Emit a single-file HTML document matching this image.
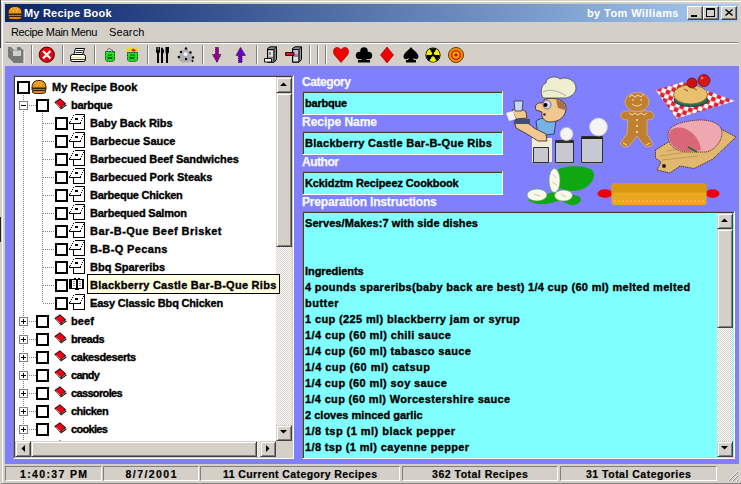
<!DOCTYPE html><html><head><meta charset="utf-8"><style>
*{margin:0;padding:0;box-sizing:border-box}
html,body{width:741px;height:484px;overflow:hidden;background:#D4D0C8}
body{position:relative;font-family:"Liberation Sans",sans-serif}
.a{position:absolute}
svg{position:absolute;overflow:visible}
.tt{position:absolute;color:#fff;font:bold 11px "Liberation Sans",sans-serif;white-space:pre;line-height:13px}
.tbtn{position:absolute;top:6px;width:16px;height:14px;background:#D4D0C8;border-top:1px solid #fff;border-left:1px solid #fff;border-right:1px solid #404040;border-bottom:1px solid #404040;box-shadow:inset -1px -1px 0 #808080}
.menu{position:absolute;top:26px;font:11px "Liberation Sans",sans-serif;color:#000;white-space:pre;line-height:13px}
.sep{position:absolute;top:45px;width:2px;height:19px;border-left:1px solid #808080;border-right:1px solid #fff}
.lbl{position:absolute;left:303px;color:#F8F8F8;font:bold 12px "Liberation Sans",sans-serif;white-space:pre;line-height:13px;-webkit-text-stroke:0.25px #F8F8F8}
.tb{position:absolute;left:302px;width:201px;height:24px;background:#80FFFF;border-top:1px solid #808080;border-left:1px solid #808080;border-right:1px solid #fff;border-bottom:1px solid #fff;box-shadow:inset 1px 1px 0 #404040}
.tbt{position:absolute;left:3px;top:5px;font:bold 11px "Liberation Sans",sans-serif;white-space:pre;color:#000;line-height:13px;-webkit-text-stroke:0.35px #000}
.rt{position:absolute;font:bold 11px "Liberation Sans",sans-serif;white-space:pre;color:#000;line-height:13px;-webkit-text-stroke:0.35px #000}
.cb{position:absolute;width:13px;height:13px;border:2px solid #000;background:#fff}
.exp{position:absolute;width:9px;height:9px;border:1px solid #808080;background:#fff}
.exp i{position:absolute;left:1px;top:3px;width:5px;height:1px;background:#000}
.exp b{position:absolute;left:3px;top:1px;width:1px;height:5px;background:#000}
.vd{position:absolute;width:1px;background:repeating-linear-gradient(to bottom,#808080 0 1px,transparent 1px 2px)}
.hd{position:absolute;height:1px;background:repeating-linear-gradient(to right,#808080 0 1px,transparent 1px 2px)}
.status{position:absolute;top:466px;height:15px;border-top:1px solid #808080;border-left:1px solid #808080;border-right:1px solid #fff;border-bottom:1px solid #fff;font:bold 10.5px "Liberation Sans",sans-serif;text-align:center;line-height:14px;white-space:pre;color:#000;-webkit-text-stroke:0.2px #000}
.btn{position:absolute;width:16px;height:16px;background:#D4D0C8;border-top:1px solid #D4D0C8;border-left:1px solid #D4D0C8;border-right:1px solid #404040;border-bottom:1px solid #404040;box-shadow:inset 1px 1px 0 #fff,inset -1px -1px 0 #808080}
.dith{position:absolute;background:repeating-conic-gradient(#D4D0C8 0 25%,#fff 0 50%) 0 0/2px 2px}
.ta{position:absolute;font:bold 11px "Liberation Sans",sans-serif;white-space:pre;color:#000;line-height:16px;letter-spacing:0.3px}
</style></head><body>
<div class="a" style="left:0;top:0;width:1px;height:48px;background:#303848"></div>
<div class="a" style="left:0;top:217px;width:1px;height:25px;background:#202020"></div>
<div class="a" style="left:1px;top:1px;width:740px;height:1px;background:#fff"></div>
<div class="a" style="left:2px;top:1px;width:1px;height:483px;background:#fff"></div>
<div class="a" style="left:1px;top:483px;width:740px;height:1px;background:#808080"></div>
<div class="a" style="left:5px;top:4px;width:733px;height:18px;background:linear-gradient(to right,#0A246A,#A6CAF0)"></div>
<svg style="left:7px;top:6px" width="16" height="14" viewBox="0 0 16 14"><path d="M1 8C1 2 4 0.5 8 0.5S15 2 15 8Z" fill="#E8961E" stroke="#3a1a00" stroke-width="1"/><path d="M4 3h1M7 2h1M10 3h1M6 5h1M9 5h1" stroke="#FFE070" stroke-width="1"/><rect x="0.5" y="8" width="15" height="2" fill="#3a2010"/><rect x="1.5" y="9.5" width="13" height="1" fill="#c8e0a0"/><path d="M1.5 10.5H14.5V12C14.5 13 13 13.5 8 13.5S1.5 13 1.5 12Z" fill="#D88A20" stroke="#3a1a00" stroke-width="1"/></svg>
<div class="tt" style="left:24px;top:7px;letter-spacing:0.2px">My Recipe Book</div>
<div class="tt" style="left:587px;top:7px;letter-spacing:0.4px">by Tom Williams</div>
<div class="tbtn" style="left:687px"><div class="a" style="left:3px;top:8px;width:6px;height:2px;background:#000"></div></div>
<div class="tbtn" style="left:703px"><div class="a" style="left:2px;top:1px;width:9px;height:9px;border:1px solid #000;border-top-width:2px"></div></div>
<div class="tbtn" style="left:721px"><svg style="left:3px;top:2px" width="8" height="7"><path d="M0.5 0.5L7.5 6.5M7.5 0.5L0.5 6.5" stroke="#000" stroke-width="1.5"/></svg></div>
<div class="menu" style="left:11px;letter-spacing:-0.35px">Recipe Main Menu</div>
<div class="menu" style="left:109px;letter-spacing:0.1px">Search</div>
<div class="a" style="left:5px;top:42px;width:733px;height:1px;background:#808080"></div>
<div class="a" style="left:5px;top:43px;width:733px;height:1px;background:#fff"></div>
<div class="sep" style="left:31px"></div>
<div class="sep" style="left:62px"></div>
<div class="sep" style="left:94px"></div>
<div class="sep" style="left:147px"></div>
<div class="sep" style="left:202px"></div>
<div class="sep" style="left:256px"></div>
<div class="sep" style="left:309px"></div>
<div class="sep" style="left:317px"></div>
<div class="sep" style="left:325px"></div>
<svg style="left:0;top:0" width="30" height="66"><path d="M8 47H11L14 50H17V47H20L24 51V63H14L8 57Z" fill="#787878"/><path d="M13 50.5H21V56H13Z" fill="#D0D0D0"/><path d="M24 51V63" stroke="#F8F8F8" stroke-width="1"/><path d="M9 48L13 52" stroke="#909090"/></svg><svg style="left:0;top:0" width="60" height="66"><circle cx="46.8" cy="54.7" r="7.6" fill="#E80010" stroke="#300000" stroke-width="0.9"/><path d="M43 51L50.5 58.5M50.5 51L43 58.5" stroke="#fff" stroke-width="2.2"/></svg><svg style="left:0;top:0" width="90" height="66"><path d="M75.5 48.5H84.5L82.5 55.5H73.5Z" fill="#fff" stroke="#000"/><path d="M76 50.5H83M75.5 52.5H82.5" stroke="#000" stroke-width="0.8"/><rect x="70.5" y="54.5" width="15" height="7" rx="2" fill="#fff" stroke="#000"/><path d="M71 57.5H85" stroke="#E0E090" stroke-width="1.4"/><path d="M71 59.5H85" stroke="#000" stroke-width="0.8"/></svg><svg style="left:0;top:0" width="120" height="66"><path d="M105.5 51.5H114.5V59.5Q114.5 61.5 110 61.5Q105.5 61.5 105.5 59.5Z" fill="#20E020" stroke="#003000" stroke-dasharray="1 0.6"/><path d="M107 50L109 48.5L113 50.5" stroke="#707070" fill="none"/><path d="M108 55H112M107.5 57L112.5 59M112.5 57L107.5 59" stroke="#004000" stroke-width="0.9"/></svg><svg style="left:0;top:0" width="140" height="66"><path d="M127.5 52.5H137.5V59.5Q137.5 61.5 132.5 61.5Q127.5 61.5 127.5 59.5Z" fill="#20E020" stroke="#003000" stroke-dasharray="1 0.6"/><path d="M126 50L128 47L130 49.5L132 47L134 49L137 47L138 52H127Z" fill="#F8D800"/><path d="M131 50L133.5 48.5L136 50.5L134 52Z" fill="#E02000"/><path d="M130 55H135M129.5 57L134.5 59M134.5 57L129.5 59" stroke="#004000" stroke-width="0.9"/></svg><svg style="left:0;top:0" width="175" height="66"><path d="M156 47H160V52L159 53.5V63H157V53.5L156 52Z" fill="#000"/><path d="M161 47.5C163 47.5 164 49 164 52L163 54V63H161Z" fill="#000"/><path d="M165.5 47H169V52L168 54V63H166V54L165.5 52Z" fill="#000"/><path d="M157 47V50M158.5 47V50" stroke="#D4D0C8" stroke-width="0.5"/></svg><svg style="left:0;top:0" width="200" height="66"><path d="M186 48L191 53L193.5 60L188 62.5L182 62.5L178 59L180.5 52Z" fill="#B0B0B0"/><circle cx="185.5" cy="54" r="2" fill="#F4F4F4"/><g fill="#000"><circle cx="186" cy="48.5" r="1.2"/><circle cx="181" cy="52" r="1.2"/><circle cx="190.5" cy="52.5" r="1.2"/><circle cx="178.8" cy="57" r="1.2"/><circle cx="193" cy="57.5" r="1.2"/><circle cx="186" cy="59" r="1.2"/><circle cx="192.5" cy="61" r="1"/></g></svg><svg style="left:0;top:0" width="225" height="66"><path d="M215.5 47.5H218.5V54.5H221L217 62.5L212.5 54.5H215.5Z" fill="#900090" stroke="#300030" stroke-width="0.8" stroke-dasharray="1.2 0.8"/></svg><svg style="left:0;top:0" width="250" height="66"><path d="M238.5 62.5H242V55.5H245.5L240.5 47.3L236 55.5H238.5Z" fill="#6A00C8" stroke="#200040" stroke-width="0.8" stroke-dasharray="1.2 0.8"/></svg><svg style="left:0;top:0" width="280" height="66"><path d="M267.5 48.5L270 46.8H276.5V59.5L274 62.3H267.5Z" fill="#909090" stroke="#000"/><path d="M267.5 49.5H274V62M274 49.5L276.5 47" stroke="#000" fill="none"/><path d="M268.5 50.5H273V56.5H268.5Z" fill="#E8E8E8"/><path d="M270 52V55" stroke="#000" stroke-width="0.8"/><path d="M264.5 58.5H271.5V62H264.5Z" fill="#F0F0F0" stroke="#000" stroke-width="0.9"/></svg><svg style="left:0;top:0" width="305" height="66"><path d="M292.5 48.5L295 46.8H301.5V59.5L299 62.3H292.5Z" fill="#909090" stroke="#000"/><path d="M292.5 49.5H299V62M299 49.5L301.5 47" stroke="#000" fill="none"/><path d="M293.5 50H298V54H293.5Z" fill="#D0B8E8"/><path d="M293.5 57H298V61H293.5Z" fill="#E0E0E0"/><path d="M285.5 52.5H294V55.5H285.5Z" fill="#E01020" stroke="#000" stroke-width="0.8"/></svg><svg style="left:0;top:0" width="352" height="66"><path d="M341 62.5L334.5 55C332.5 52 333.5 47.5 337 47.5C339 47.5 340.3 48.8 341 50C341.7 48.8 343 47.5 345 47.5C348.5 47.5 349.5 52 347.5 55Z" fill="#F40000" stroke="#800000" stroke-width="0.6"/></svg><svg style="left:0;top:0" width="375" height="66"><circle cx="364" cy="51" r="3.8" fill="#000"/><circle cx="359.6" cy="55.5" r="3.8" fill="#000"/><circle cx="368.4" cy="55.5" r="3.8" fill="#000"/><path d="M362.5 54H365.5L366.5 60H370V62.5H358V60H361.5Z" fill="#000"/></svg><svg style="left:0;top:0" width="396" height="66"><path d="M387 47L393.5 55L387 63L380.5 55Z" fill="#F40000" stroke="#800000" stroke-width="0.6"/></svg><svg style="left:0;top:0" width="422" height="66"><path d="M411 47C409 50 403.5 53 403.5 56.5C403.5 59 406 60 408 58.5L409 58L408 60H406V62.5H416V60H414L413 58L414 58.5C416 60 418.5 59 418.5 56.5C418.5 53 413 50 411 47Z" fill="#000"/></svg><svg style="left:0;top:0" width="444" height="66"><circle cx="433" cy="55" r="7.6" fill="#000"/><circle cx="433" cy="55" r="6.6" fill="#F0F000"/><path d="M433 55L436.3 49.3A6.6 6.6 0 0 0 429.7 49.3Z M433 55L439.6 55A6.6 6.6 0 0 1 436.3 60.7Z M433 55L429.7 60.7A6.6 6.6 0 0 1 426.4 55Z" fill="#000"/><path d="M433 55L429.7 49.3A6.6 6.6 0 0 0 426.4 55Z M433 55L436.3 60.7A6.6 6.6 0 0 1 429.7 60.7Z M433 55L439.6 55A6.6 6.6 0 0 0 436.3 49.3Z" fill="#F0F000"/><circle cx="433" cy="55" r="1.6" fill="#000"/></svg><svg style="left:0;top:0" width="466" height="66"><circle cx="456" cy="55" r="7.5" fill="#E8A000" stroke="#602000" stroke-width="0.9"/><circle cx="456" cy="55" r="5.3" fill="#E83000"/><circle cx="456" cy="55" r="3.3" fill="#F8C000"/><circle cx="456" cy="55" r="1.7" fill="#E00000"/></svg>
<div class="a" style="left:5px;top:66px;width:734px;height:398px;background:#8080FF"></div>
<div class="a" style="left:13px;top:75px;width:281px;height:384px;background:#fff;border-top:1px solid #808080;border-left:1px solid #808080;border-right:1px solid #fff;border-bottom:1px solid #fff"><div class="a" style="left:0;top:0;right:0;bottom:0;border-top:1px solid #404040;border-left:1px solid #404040;border-right:1px solid #D4D0C8;border-bottom:1px solid #D4D0C8"></div></div>
<div class="a" style="left:0;top:0;width:741px;height:441px;overflow:hidden;clip-path:inset(77px 450px 0 15px)"><div class="vd" style="left:23px;top:95px;height:345px"></div><div class="vd" style="left:42px;top:113px;height:190px"></div><div class="cb" style="left:17px;top:81px"></div><svg style="left:31px;top:80px" width="16" height="14" viewBox="0 0 16 14"><path d="M1 8C1 2 4 0.5 8 0.5S15 2 15 8Z" fill="#E8961E" stroke="#3a1a00" stroke-width="1"/><path d="M4 3h1M7 2h1M10 3h1M6 5h1M9 5h1" stroke="#FFE070" stroke-width="1"/><rect x="0.5" y="8" width="15" height="2" fill="#3a2010"/><rect x="1.5" y="9.5" width="13" height="1" fill="#c8e0a0"/><path d="M1.5 10.5H14.5V12C14.5 13 13 13.5 8 13.5S1.5 13 1.5 12Z" fill="#D88A20" stroke="#3a1a00" stroke-width="1"/></svg><div class="rt" style="left:52px;top:81px;letter-spacing:0.04px">My Recipe Book</div><div class="hd" style="left:29px;top:105px;width:7px"></div><div class="exp" style="left:19px;top:101px"><i></i></div><div class="cb" style="left:36px;top:99px"></div><svg style="left:54px;top:98px" width="14" height="12" viewBox="0 0 14 12"><path d="M0.3 4.2L6 0.2L12.2 5.8L6.4 10.8Z" fill="#000"/><path d="M1.6 4.3L6 1.3L10.9 5.8L6.4 9.6Z" fill="#F00010"/><path d="M1.8 5.3L6.3 9.3" stroke="#FFC0C0" stroke-width="0.9"/><path d="M10.8 7L8 9.3" stroke="#80D0A0" stroke-width="1"/><path d="M12 6.5L12.8 7.2L7 11.6L6.2 10.9Z" fill="#000"/></svg><div class="rt" style="left:71px;top:99px;letter-spacing:-0.3px">barbque</div><div class="hd" style="left:43px;top:123px;width:11px"></div><div class="cb" style="left:55px;top:117px"></div><svg style="left:69px;top:114px" width="16" height="16" viewBox="0 0 16 16" shape-rendering="crispEdges"><path d="M6 0H16V1H6ZM15 1H16V16H15ZM4 15H15V16H4ZM4 10H5V15H4ZM0 9H12V10H0ZM0 8H1V9H0Z" fill="#000"/><path d="M1 7H2V8H1ZM2 5H3V6H2ZM3 3H4V4H3ZM4 1H5V2H4ZM11 8H12V9H11ZM12 6H13V7H12ZM13 4H14V5H13ZM14 2H15V3H14Z" fill="#000"/><path d="M6 4H9V6H6Z" fill="#000"/></svg><div class="rt" style="left:90px;top:117px;letter-spacing:-0.04px">Baby Back Ribs</div><div class="hd" style="left:43px;top:141px;width:11px"></div><div class="cb" style="left:55px;top:135px"></div><svg style="left:69px;top:132px" width="16" height="16" viewBox="0 0 16 16" shape-rendering="crispEdges"><path d="M6 0H16V1H6ZM15 1H16V16H15ZM4 15H15V16H4ZM4 10H5V15H4ZM0 9H12V10H0ZM0 8H1V9H0Z" fill="#000"/><path d="M1 7H2V8H1ZM2 5H3V6H2ZM3 3H4V4H3ZM4 1H5V2H4ZM11 8H12V9H11ZM12 6H13V7H12ZM13 4H14V5H13ZM14 2H15V3H14Z" fill="#000"/><path d="M6 4H9V6H6Z" fill="#000"/></svg><div class="rt" style="left:90px;top:135px;letter-spacing:-0.01px">Barbecue Sauce</div><div class="hd" style="left:43px;top:159px;width:11px"></div><div class="cb" style="left:55px;top:153px"></div><svg style="left:69px;top:150px" width="16" height="16" viewBox="0 0 16 16" shape-rendering="crispEdges"><path d="M6 0H16V1H6ZM15 1H16V16H15ZM4 15H15V16H4ZM4 10H5V15H4ZM0 9H12V10H0ZM0 8H1V9H0Z" fill="#000"/><path d="M1 7H2V8H1ZM2 5H3V6H2ZM3 3H4V4H3ZM4 1H5V2H4ZM11 8H12V9H11ZM12 6H13V7H12ZM13 4H14V5H13ZM14 2H15V3H14Z" fill="#000"/><path d="M6 4H9V6H6Z" fill="#000"/></svg><div class="rt" style="left:90px;top:153px;letter-spacing:-0.06px">Barbecued Beef Sandwiches</div><div class="hd" style="left:43px;top:177px;width:11px"></div><div class="cb" style="left:55px;top:171px"></div><svg style="left:69px;top:168px" width="16" height="16" viewBox="0 0 16 16" shape-rendering="crispEdges"><path d="M6 0H16V1H6ZM15 1H16V16H15ZM4 15H15V16H4ZM4 10H5V15H4ZM0 9H12V10H0ZM0 8H1V9H0Z" fill="#000"/><path d="M1 7H2V8H1ZM2 5H3V6H2ZM3 3H4V4H3ZM4 1H5V2H4ZM11 8H12V9H11ZM12 6H13V7H12ZM13 4H14V5H13ZM14 2H15V3H14Z" fill="#000"/><path d="M6 4H9V6H6Z" fill="#000"/></svg><div class="rt" style="left:90px;top:171px;letter-spacing:-0.03px">Barbecued Pork Steaks</div><div class="hd" style="left:43px;top:195px;width:11px"></div><div class="cb" style="left:55px;top:189px"></div><svg style="left:69px;top:186px" width="16" height="16" viewBox="0 0 16 16" shape-rendering="crispEdges"><path d="M6 0H16V1H6ZM15 1H16V16H15ZM4 15H15V16H4ZM4 10H5V15H4ZM0 9H12V10H0ZM0 8H1V9H0Z" fill="#000"/><path d="M1 7H2V8H1ZM2 5H3V6H2ZM3 3H4V4H3ZM4 1H5V2H4ZM11 8H12V9H11ZM12 6H13V7H12ZM13 4H14V5H13ZM14 2H15V3H14Z" fill="#000"/><path d="M6 4H9V6H6Z" fill="#000"/></svg><div class="rt" style="left:90px;top:189px;letter-spacing:-0.25px">Barbeque Chicken</div><div class="hd" style="left:43px;top:213px;width:11px"></div><div class="cb" style="left:55px;top:207px"></div><svg style="left:69px;top:204px" width="16" height="16" viewBox="0 0 16 16" shape-rendering="crispEdges"><path d="M6 0H16V1H6ZM15 1H16V16H15ZM4 15H15V16H4ZM4 10H5V15H4ZM0 9H12V10H0ZM0 8H1V9H0Z" fill="#000"/><path d="M1 7H2V8H1ZM2 5H3V6H2ZM3 3H4V4H3ZM4 1H5V2H4ZM11 8H12V9H11ZM12 6H13V7H12ZM13 4H14V5H13ZM14 2H15V3H14Z" fill="#000"/><path d="M6 4H9V6H6Z" fill="#000"/></svg><div class="rt" style="left:90px;top:207px;letter-spacing:-0.22px">Barbequed Salmon</div><div class="hd" style="left:43px;top:231px;width:11px"></div><div class="cb" style="left:55px;top:225px"></div><svg style="left:69px;top:222px" width="16" height="16" viewBox="0 0 16 16" shape-rendering="crispEdges"><path d="M6 0H16V1H6ZM15 1H16V16H15ZM4 15H15V16H4ZM4 10H5V15H4ZM0 9H12V10H0ZM0 8H1V9H0Z" fill="#000"/><path d="M1 7H2V8H1ZM2 5H3V6H2ZM3 3H4V4H3ZM4 1H5V2H4ZM11 8H12V9H11ZM12 6H13V7H12ZM13 4H14V5H13ZM14 2H15V3H14Z" fill="#000"/><path d="M6 4H9V6H6Z" fill="#000"/></svg><div class="rt" style="left:90px;top:225px;letter-spacing:0.44px">Bar-B-Que Beef Brisket</div><div class="hd" style="left:43px;top:249px;width:11px"></div><div class="cb" style="left:55px;top:243px"></div><svg style="left:69px;top:240px" width="16" height="16" viewBox="0 0 16 16" shape-rendering="crispEdges"><path d="M6 0H16V1H6ZM15 1H16V16H15ZM4 15H15V16H4ZM4 10H5V15H4ZM0 9H12V10H0ZM0 8H1V9H0Z" fill="#000"/><path d="M1 7H2V8H1ZM2 5H3V6H2ZM3 3H4V4H3ZM4 1H5V2H4ZM11 8H12V9H11ZM12 6H13V7H12ZM13 4H14V5H13ZM14 2H15V3H14Z" fill="#000"/><path d="M6 4H9V6H6Z" fill="#000"/></svg><div class="rt" style="left:90px;top:243px;letter-spacing:0.37px">B-B-Q Pecans</div><div class="hd" style="left:43px;top:267px;width:11px"></div><div class="cb" style="left:55px;top:261px"></div><svg style="left:69px;top:258px" width="16" height="16" viewBox="0 0 16 16" shape-rendering="crispEdges"><path d="M6 0H16V1H6ZM15 1H16V16H15ZM4 15H15V16H4ZM4 10H5V15H4ZM0 9H12V10H0ZM0 8H1V9H0Z" fill="#000"/><path d="M1 7H2V8H1ZM2 5H3V6H2ZM3 3H4V4H3ZM4 1H5V2H4ZM11 8H12V9H11ZM12 6H13V7H12ZM13 4H14V5H13ZM14 2H15V3H14Z" fill="#000"/><path d="M6 4H9V6H6Z" fill="#000"/></svg><div class="rt" style="left:90px;top:261px;letter-spacing:0.0px">Bbq Spareribs</div><div class="hd" style="left:43px;top:285px;width:11px"></div><div class="cb" style="left:55px;top:279px"></div><svg style="left:69px;top:278px" width="16" height="13" viewBox="0 0 16 13" shape-rendering="crispEdges"><path d="M0 1H5V0H7V1H9V0H11V1H15V11H10V12H6V11H0Z" fill="#000"/><path d="M3 2H7V10H3ZM9 2H13V10H9Z" fill="#fff"/><path d="M4 3H6V4H4ZM4 5H6V6H4ZM4 7H6V8H4ZM10 3H12V4H10ZM10 5H12V6H10ZM10 7H12V8H10Z" fill="#909090"/></svg><div class="a" style="left:87px;top:274px;width:193px;height:20px;background:#FFFFE1;border:1px solid #000"></div><div class="rt" style="left:90px;top:279px;letter-spacing:0.3px">Blackberry Castle Bar-B-Que Ribs</div><div class="hd" style="left:43px;top:303px;width:11px"></div><div class="cb" style="left:55px;top:297px"></div><svg style="left:69px;top:294px" width="16" height="16" viewBox="0 0 16 16" shape-rendering="crispEdges"><path d="M6 0H16V1H6ZM15 1H16V16H15ZM4 15H15V16H4ZM4 10H5V15H4ZM0 9H12V10H0ZM0 8H1V9H0Z" fill="#000"/><path d="M1 7H2V8H1ZM2 5H3V6H2ZM3 3H4V4H3ZM4 1H5V2H4ZM11 8H12V9H11ZM12 6H13V7H12ZM13 4H14V5H13ZM14 2H15V3H14Z" fill="#000"/><path d="M6 4H9V6H6Z" fill="#000"/></svg><div class="rt" style="left:90px;top:297px;letter-spacing:-0.19px">Easy Classic Bbq Chicken</div><div class="hd" style="left:29px;top:321px;width:7px"></div><div class="exp" style="left:19px;top:317px"><i></i><b></b></div><div class="cb" style="left:36px;top:315px"></div><svg style="left:54px;top:314px" width="14" height="12" viewBox="0 0 14 12"><path d="M0.3 4.2L6 0.2L12.2 5.8L6.4 10.8Z" fill="#000"/><path d="M1.6 4.3L6 1.3L10.9 5.8L6.4 9.6Z" fill="#F00010"/><path d="M1.8 5.3L6.3 9.3" stroke="#FFC0C0" stroke-width="0.9"/><path d="M10.8 7L8 9.3" stroke="#80D0A0" stroke-width="1"/><path d="M12 6.5L12.8 7.2L7 11.6L6.2 10.9Z" fill="#000"/></svg><div class="rt" style="left:71px;top:315px;letter-spacing:0.06px">beef</div><div class="hd" style="left:29px;top:339px;width:7px"></div><div class="exp" style="left:19px;top:335px"><i></i><b></b></div><div class="cb" style="left:36px;top:333px"></div><svg style="left:54px;top:332px" width="14" height="12" viewBox="0 0 14 12"><path d="M0.3 4.2L6 0.2L12.2 5.8L6.4 10.8Z" fill="#000"/><path d="M1.6 4.3L6 1.3L10.9 5.8L6.4 9.6Z" fill="#F00010"/><path d="M1.8 5.3L6.3 9.3" stroke="#FFC0C0" stroke-width="0.9"/><path d="M10.8 7L8 9.3" stroke="#80D0A0" stroke-width="1"/><path d="M12 6.5L12.8 7.2L7 11.6L6.2 10.9Z" fill="#000"/></svg><div class="rt" style="left:71px;top:333px;letter-spacing:-0.5px">breads</div><div class="hd" style="left:29px;top:357px;width:7px"></div><div class="exp" style="left:19px;top:353px"><i></i><b></b></div><div class="cb" style="left:36px;top:351px"></div><svg style="left:54px;top:350px" width="14" height="12" viewBox="0 0 14 12"><path d="M0.3 4.2L6 0.2L12.2 5.8L6.4 10.8Z" fill="#000"/><path d="M1.6 4.3L6 1.3L10.9 5.8L6.4 9.6Z" fill="#F00010"/><path d="M1.8 5.3L6.3 9.3" stroke="#FFC0C0" stroke-width="0.9"/><path d="M10.8 7L8 9.3" stroke="#80D0A0" stroke-width="1"/><path d="M12 6.5L12.8 7.2L7 11.6L6.2 10.9Z" fill="#000"/></svg><div class="rt" style="left:71px;top:351px;letter-spacing:-0.41px">cakesdeserts</div><div class="hd" style="left:29px;top:375px;width:7px"></div><div class="exp" style="left:19px;top:371px"><i></i><b></b></div><div class="cb" style="left:36px;top:369px"></div><svg style="left:54px;top:368px" width="14" height="12" viewBox="0 0 14 12"><path d="M0.3 4.2L6 0.2L12.2 5.8L6.4 10.8Z" fill="#000"/><path d="M1.6 4.3L6 1.3L10.9 5.8L6.4 9.6Z" fill="#F00010"/><path d="M1.8 5.3L6.3 9.3" stroke="#FFC0C0" stroke-width="0.9"/><path d="M10.8 7L8 9.3" stroke="#80D0A0" stroke-width="1"/><path d="M12 6.5L12.8 7.2L7 11.6L6.2 10.9Z" fill="#000"/></svg><div class="rt" style="left:71px;top:369px;letter-spacing:-0.7px">candy</div><div class="hd" style="left:29px;top:393px;width:7px"></div><div class="exp" style="left:19px;top:389px"><i></i><b></b></div><div class="cb" style="left:36px;top:387px"></div><svg style="left:54px;top:386px" width="14" height="12" viewBox="0 0 14 12"><path d="M0.3 4.2L6 0.2L12.2 5.8L6.4 10.8Z" fill="#000"/><path d="M1.6 4.3L6 1.3L10.9 5.8L6.4 9.6Z" fill="#F00010"/><path d="M1.8 5.3L6.3 9.3" stroke="#FFC0C0" stroke-width="0.9"/><path d="M10.8 7L8 9.3" stroke="#80D0A0" stroke-width="1"/><path d="M12 6.5L12.8 7.2L7 11.6L6.2 10.9Z" fill="#000"/></svg><div class="rt" style="left:71px;top:387px;letter-spacing:-0.65px">cassoroles</div><div class="hd" style="left:29px;top:411px;width:7px"></div><div class="exp" style="left:19px;top:407px"><i></i><b></b></div><div class="cb" style="left:36px;top:405px"></div><svg style="left:54px;top:404px" width="14" height="12" viewBox="0 0 14 12"><path d="M0.3 4.2L6 0.2L12.2 5.8L6.4 10.8Z" fill="#000"/><path d="M1.6 4.3L6 1.3L10.9 5.8L6.4 9.6Z" fill="#F00010"/><path d="M1.8 5.3L6.3 9.3" stroke="#FFC0C0" stroke-width="0.9"/><path d="M10.8 7L8 9.3" stroke="#80D0A0" stroke-width="1"/><path d="M12 6.5L12.8 7.2L7 11.6L6.2 10.9Z" fill="#000"/></svg><div class="rt" style="left:71px;top:405px;letter-spacing:-0.56px">chicken</div><div class="hd" style="left:29px;top:429px;width:7px"></div><div class="exp" style="left:19px;top:425px"><i></i><b></b></div><div class="cb" style="left:36px;top:423px"></div><svg style="left:54px;top:422px" width="14" height="12" viewBox="0 0 14 12"><path d="M0.3 4.2L6 0.2L12.2 5.8L6.4 10.8Z" fill="#000"/><path d="M1.6 4.3L6 1.3L10.9 5.8L6.4 9.6Z" fill="#F00010"/><path d="M1.8 5.3L6.3 9.3" stroke="#FFC0C0" stroke-width="0.9"/><path d="M10.8 7L8 9.3" stroke="#80D0A0" stroke-width="1"/><path d="M12 6.5L12.8 7.2L7 11.6L6.2 10.9Z" fill="#000"/></svg><div class="rt" style="left:71px;top:423px;letter-spacing:-0.69px">cookies</div><div class="hd" style="left:29px;top:447px;width:7px"></div><div class="exp" style="left:19px;top:443px"><i></i><b></b></div><div class="cb" style="left:36px;top:441px"></div><svg style="left:54px;top:440px" width="14" height="12" viewBox="0 0 14 12"><path d="M0.3 4.2L6 0.2L12.2 5.8L6.4 10.8Z" fill="#000"/><path d="M1.6 4.3L6 1.3L10.9 5.8L6.4 9.6Z" fill="#F00010"/><path d="M1.8 5.3L6.3 9.3" stroke="#FFC0C0" stroke-width="0.9"/><path d="M10.8 7L8 9.3" stroke="#80D0A0" stroke-width="1"/><path d="M12 6.5L12.8 7.2L7 11.6L6.2 10.9Z" fill="#000"/></svg></div>
<div class="dith" style="left:276px;top:247px;width:16px;height:178px"></div>
<div class="btn" style="left:276px;top:77px;width:16px;height:16px"></div><svg style="left:280px;top:82px" width="7" height="4"><path d="M0 4H7L3.5 0.5Z" fill="#000"/></svg>
<div class="btn" style="left:276px;top:93px;width:16px;height:154px"></div>
<div class="btn" style="left:276px;top:425px;width:16px;height:16px"></div><svg style="left:280px;top:430px" width="7" height="4"><path d="M0 0H7L3.5 3.5Z" fill="#000"/></svg>
<div class="dith" style="left:257px;top:441px;width:3px;height:16px"></div>
<div class="btn" style="left:15px;top:441px;width:16px;height:16px"></div><svg style="left:21px;top:445px" width="4" height="7"><path d="M4 0V7L0.5 3.5Z" fill="#000"/></svg>
<div class="btn" style="left:31px;top:441px;width:226px;height:16px"></div>
<div class="btn" style="left:260px;top:441px;width:16px;height:16px"></div><svg style="left:266px;top:445px" width="4" height="7"><path d="M0 0V7L3.5 3.5Z" fill="#000"/></svg>
<div class="a" style="left:276px;top:441px;width:16px;height:16px;background:#D4D0C8"></div>
<div class="a" style="left:87px;top:274px;width:193px;height:20px;background:#FFFFE1;border:1px solid #000"></div>
<div class="rt" style="left:90px;top:279px;letter-spacing:0.27px">Blackberry Castle Bar-B-Que Ribs</div>
<div class="lbl" style="top:76px;left:302px;letter-spacing:-0.43px">Category</div>
<div class="lbl" style="top:116px;left:302px;letter-spacing:-0.04px">Recipe Name</div>
<div class="lbl" style="top:156px;left:302px;letter-spacing:-0.47px">Author</div>
<div class="lbl" style="top:196px;left:302px;letter-spacing:-0.17px">Preparation Instructions</div>
<div class="tb" style="top:91px"><div class="tbt" style="left:2px;top:5px;letter-spacing:-0.23px">barbque</div></div>
<div class="tb" style="top:131px"><div class="tbt" style="left:2px;top:5px;letter-spacing:0.29px">Blackberry Castle Bar-B-Que Ribs</div></div>
<div class="tb" style="top:171px"><div class="tbt" style="left:2px;top:5px;letter-spacing:-0.11px">Kckidztm Recipeez Cookbook</div></div>
<svg style="left:0;top:0" width="741" height="484">
<!-- chef body -->
<path d="M532 138H552V162H532Z" fill="#F0ECD8"/>
<path d="M536 121C540 117 552 117 556 121L554 134L538 136Z" fill="#78B0E8" stroke="#203050" stroke-width="0.8"/>
<path d="M514 121C520 119 528 122 534 128L546 134L547 141L538 141L527 134L516 128Z" fill="#F0C890" stroke="#402010" stroke-width="0.8"/>
<path d="M512 110C516 108 522 108 526 112L527 118L516 119Z" fill="#F0C890" stroke="#402010" stroke-width="0.8"/>
<path d="M506 113L513 111L516 119L509 121Z" fill="#F4F4F4"/>
<path d="M514 101H523L522 111H515Z" fill="#C8D8F0" stroke="#303050" stroke-width="0.8"/>
<path d="M515 119H530V124H515Z" fill="#405070"/>
<!-- face -->
<path d="M545 99C556 97 566 100 566 108C566 116 560 122 550 122C544 122 541 117 542 112L536 110C534 106 537 102 542 103Z" fill="#F0C890" stroke="#402010" stroke-width="0.8"/>
<path d="M556 100C562 100 566 104 565 110L558 108Z" fill="#A87040"/>
<ellipse cx="547" cy="104.5" rx="4" ry="4.5" fill="#D0D8F8" stroke="#303040" stroke-width="0.6"/>
<circle cx="545.5" cy="105" r="2" fill="#000"/>
<circle cx="544.5" cy="114.5" r="1.3" fill="#602020"/>
<!-- hat -->
<path d="M543 98C540 92 541 85 546 83C546 77 556 75 560 79C566 76 576 80 576 88C576 94 570 97 566 98Z" fill="#EEEED0" stroke="#505040" stroke-width="0.8"/>
<path d="M543 92C548 89 558 90 566 96" stroke="#A0A080" fill="none" stroke-width="0.8"/>

<!-- chef pots -->
<g stroke="#303030" stroke-width="1">
<path d="M533.5 147.5H548.5V162.5H533.5Z" fill="#C8C8D0"/>
<path d="M555.5 140.5H573.5V162.5H555.5Z" fill="#C8C8D0"/>
<path d="M581.5 136.5H602.5V162.5H581.5Z" fill="#C8C8D0"/>
</g>
<path d="M582 137H602V139H582Z" fill="#202020"/>
<path d="M556 141H573V143H556Z" fill="#303030"/>
<path d="M534 163H603V165H534Z" fill="#9090B0" opacity="0.6"/>
<!-- steam -->
<circle cx="598.5" cy="127" r="9" fill="#F4F4F4" stroke="#C0C0C0" stroke-width="0.8"/>
<circle cx="566.5" cy="134" r="6.5" fill="#F4F4F4" stroke="#C0C0C0" stroke-width="0.8"/>
<!-- gingerbread -->
<g fill="#C08030" stroke="#E0B070" stroke-width="0.8">
<path d="M628 111C618 111 618 120 628 120L627 134L621 142C619 146 627 149 630 145L637 136L644 145C647 149 655 146 652 142L647 134L647 120C656 120 656 111 647 111Z"/>
<ellipse cx="637" cy="102" rx="12" ry="9.5"/>
</g>
<g fill="none" stroke="#FFF0D0" stroke-width="0.8">
<path d="M629 97L632 95L635 97L638 95L641 97L644 94"/>
<path d="M632 104Q637 108 642 104"/>
<path d="M629 113L632 115L635 113L638 115L641 113L644 115L647 113"/>
<path d="M623 143L627 145M646 145L650 143"/>
</g>
<circle cx="637" cy="120" r="0.9" fill="#FFF0D0"/><circle cx="637" cy="126" r="0.9" fill="#FFF0D0"/><circle cx="637" cy="132" r="0.9" fill="#FFF0D0"/>
<circle cx="633" cy="100" r="0.8" fill="#FFF0D0"/><circle cx="641" cy="100" r="0.8" fill="#FFF0D0"/>

<!-- checker cloth -->
<defs>
<pattern id="chk" width="9" height="9" patternUnits="userSpaceOnUse" patternTransform="rotate(20)">
<rect width="9" height="9" fill="#F8F8F8"/><rect width="4.5" height="4.5" fill="#E02030"/><rect x="4.5" y="4.5" width="4.5" height="4.5" fill="#E02030"/>
</pattern>
</defs>
<path d="M655.5 90L683 82L735 101L676.5 118.5Z" fill="url(#chk)"/>
<!-- pie -->
<ellipse cx="691" cy="100" rx="17" ry="6.5" fill="#207060" stroke="#103030" stroke-width="0.8"/>
<ellipse cx="690.5" cy="94.5" rx="17" ry="9.5" fill="#E8C070" stroke="#806020" stroke-width="0.8"/>
<path d="M684 89L688 91M693 88L697 90" stroke="#604020" stroke-width="0.8"/>
<!-- apples -->
<circle cx="692" cy="83" r="5" fill="#D01010" stroke="#500000" stroke-width="0.6"/>
<circle cx="704" cy="80.5" r="6" fill="#D81818" stroke="#500000" stroke-width="0.6"/>
<circle cx="702" cy="78" r="1.3" fill="#FF8080"/>

<!-- cutting board -->
<path d="M655.5 150L670 141L720 128.5L736 137L713 159L694 168.5L680 166L670 173L657 170L661 162L655.5 158Z" fill="#E0B870" stroke="#402000" stroke-width="0.9" stroke-dasharray="1.2 0.8"/>
<path d="M660 156L700 150M662 160L698 156M666 151L700 146" stroke="#B08040" stroke-width="0.6"/>
<circle cx="664" cy="166" r="2" fill="#302010"/>
<!-- ham -->
<path d="M668 135C668 126 680 121 700 120C712 120 722 124 722 133C722 140 716 150 706 152L690 152C676 152 668 146 668 135Z" fill="#F0A8B0" stroke="#402020" stroke-width="0.8" stroke-dasharray="1.2 0.8"/>
<path d="M669 134C670 128 678 126 686 129C694 133 700 140 701 150L690 152C676 151 668 144 669 134Z" fill="#D86878"/>
<path d="M688 147L697 152" stroke="#207030" stroke-width="2"/>

<!-- cucumber -->
<path d="M557 170C565 165 585 165 592 170C597 175 592 184 585 188C575 193 562 191 557 186Z" fill="#10A810"/>
<path d="M528 200C535 206 550 205 560 200L570 205C578 206 583 201 580 197L560 190Z" fill="#10A810"/>
<ellipse cx="554.5" cy="180.5" rx="5.5" ry="12" fill="#F8F8F0" stroke="#60A040" stroke-width="0.6"/>
<ellipse cx="537" cy="195" rx="10" ry="6" fill="#F8F8F0" stroke="#60A040" stroke-width="0.6"/>
<ellipse cx="563.5" cy="195.5" rx="9" ry="5.5" fill="#F8F8F0" stroke="#60A040" stroke-width="0.6"/>
<path d="M553 174L556 178M552 182L557 185M534 194L540 196M561 194L566 197" stroke="#D8D060" stroke-width="1"/>

<!-- rolling pin -->
<ellipse cx="605" cy="193.5" rx="7.5" ry="4.3" fill="#F00000"/>
<ellipse cx="712.5" cy="193.5" rx="7" ry="4.3" fill="#F00000"/>
<rect x="611.5" y="183.5" width="95" height="21.5" rx="2.5" fill="#E8A820"/>
<rect x="611.5" y="183.5" width="95" height="9" rx="2" fill="#D89810"/>
<path d="M614 201H704" stroke="#F8C860" stroke-width="1" stroke-dasharray="2 2"/>
</svg>

<div class="a" style="left:302px;top:211px;width:433px;height:248px;background:#80FFFF;border-top:1px solid #808080;border-left:1px solid #808080;border-right:1px solid #fff;border-bottom:1px solid #fff;box-shadow:inset 1px 1px 0 #404040"></div>
<div class="rt" style="left:305px;top:217px;letter-spacing:0.08px">Serves/Makes:7 with side dishes</div><div class="rt" style="left:305px;top:265px;letter-spacing:-0.06px">Ingredients</div><div class="rt" style="left:305px;top:281px;letter-spacing:0.31px">4 pounds spareribs(baby back are best) 1/4 cup (60 ml) melted melted</div><div class="rt" style="left:305px;top:297px;letter-spacing:0.47px">butter</div><div class="rt" style="left:305px;top:313px;letter-spacing:0.37px">1 cup (225 ml) blackberry jam or syrup</div><div class="rt" style="left:305px;top:329px;letter-spacing:0.39px">1/4 cup (60 ml) chili sauce</div><div class="rt" style="left:305px;top:345px;letter-spacing:0.38px">1/4 cup (60 ml) tabasco sauce</div><div class="rt" style="left:305px;top:361px;letter-spacing:0.48px">1/4 cup (60 ml) catsup</div><div class="rt" style="left:305px;top:377px;letter-spacing:0.38px">1/4 cup (60 ml) soy sauce</div><div class="rt" style="left:305px;top:393px;letter-spacing:0.33px">1/4 cup (60 ml) Worcestershire sauce</div><div class="rt" style="left:305px;top:409px;letter-spacing:0.01px">2 cloves minced garlic</div><div class="rt" style="left:305px;top:425px;letter-spacing:0.46px">1/8 tsp (1 ml) black pepper</div><div class="rt" style="left:305px;top:441px;letter-spacing:0.36px">1/8 tsp (1 ml) cayenne pepper</div>
<div class="dith" style="left:717px;top:328px;width:16px;height:113px"></div>
<div class="btn" style="left:717px;top:213px;width:16px;height:16px"></div><svg style="left:721px;top:218px" width="7" height="4"><path d="M0 4H7L3.5 0.5Z" fill="#000"/></svg>
<div class="btn" style="left:717px;top:229px;width:16px;height:99px"></div>
<div class="btn" style="left:717px;top:441px;width:16px;height:16px"></div><svg style="left:721px;top:446px" width="7" height="4"><path d="M0 0H7L3.5 3.5Z" fill="#000"/></svg>
<div class="status" style="left:5px;width:97px;letter-spacing:1.35px;padding-left:1.35px">1:40:37 PM</div>
<div class="status" style="left:103px;width:96px;letter-spacing:1.45px;padding-left:1.45px">8/7/2001</div>
<div class="status" style="left:200px;width:200px;letter-spacing:0.4px;padding-left:0.4px">11 Current Category Recipes</div>
<div class="status" style="left:402px;width:156px;letter-spacing:0.49px;padding-left:0.49px">362 Total Recipes</div>
<div class="status" style="left:560px;width:157px;letter-spacing:0.49px;padding-left:0.49px">31 Total Categories</div>
<svg style="left:728px;top:471px" width="11" height="11" shape-rendering="crispEdges"><path d="M10 0L0 10M10 4L4 10M10 8L8 10" stroke="#fff" stroke-width="1"/><path d="M10 1L1 10M10 5L5 10M10 9L9 10" stroke="#808080" stroke-width="1"/></svg>
</body></html>
